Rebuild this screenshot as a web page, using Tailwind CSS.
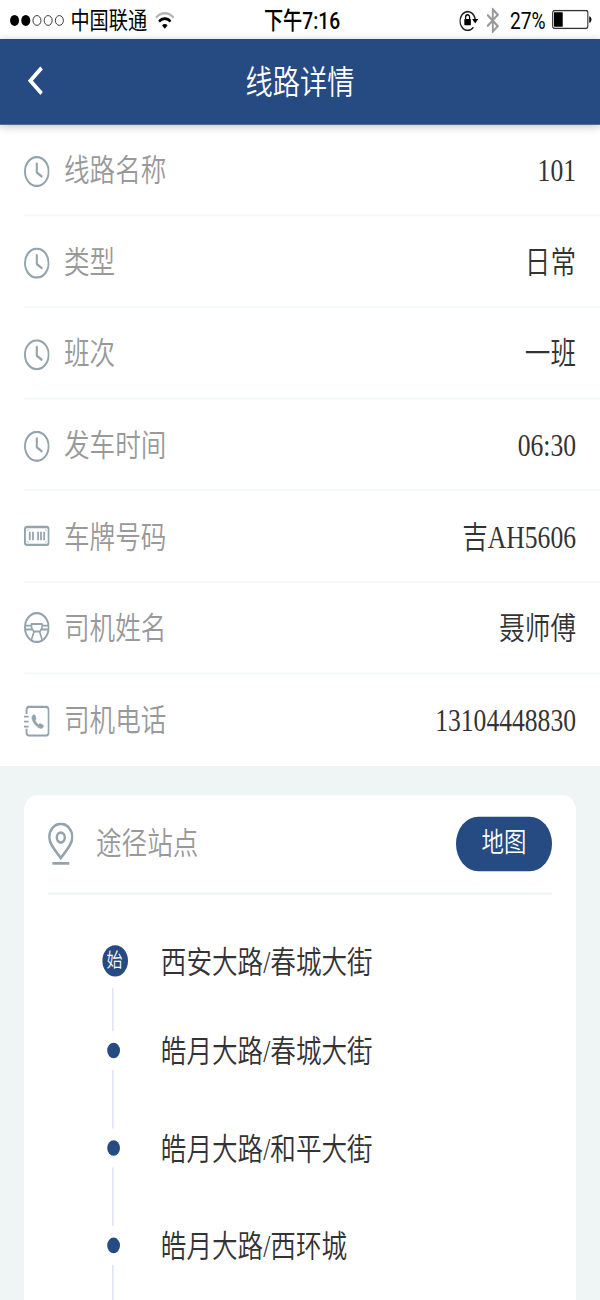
<!DOCTYPE html>
<html lang="zh-CN">
<head>
    <meta charset="UTF-8">
    <meta name="viewport" content="width=device-width, initial-scale=1.0">
    <title>线路详情</title>
    <script src="https://cdn.jsdelivr.net/npm/@tailwindcss/browser@4"></script>
</head>
<body class="w-[600px] h-[1300px] overflow-hidden bg-[#eff4f5]">

    <svg class="hidden">
        <symbol id="clock" viewBox="0 0 16 16">
            <g fill="none" stroke="#93a4ad" stroke-linecap="round" stroke-linejoin="round">
                <circle cx="8" cy="8" r="7.4" stroke-width="1.2"/>
                <path d="M8 4v4.500l3 2" stroke-width="1.3"/>
            </g>
        </symbol>
    </svg>

    <!-- 375x667 screen stretched to the window -->
    <div class="w-[375px] h-[667px] overflow-hidden origin-top-left [transform:scale(1.6,1.949)] flex flex-col bg-[#eff4f5] text-base text-[#333] font-[350] font-['Liberation_Serif','Noto_Sans_CJK_SC',serif]">

        <div class="h-5 shrink-0 bg-white grid grid-cols-[1fr_auto_1fr] items-center pl-[6px] pr-[5px] text-xs text-black leading-4 font-normal font-['Roboto','Noto_Sans_CJK_SC',sans-serif]">
            <div class="flex items-center">
                <svg class="w-[35px] h-[7px]" viewBox="0 0 35 7">
                    <circle cx="3.1" cy="3.5" r="2.8"/>
                    <circle cx="10.1" cy="3.5" r="2.8"/>
                    <g fill="none" stroke="#222" stroke-width=".5">
                        <circle cx="17.1" cy="3.5" r="2.5"/>
                        <circle cx="24.1" cy="3.5" r="2.5"/>
                        <circle cx="31.1" cy="3.5" r="2.5"/>
                    </g>
                </svg>
                <span class="ml-[3px] pt-[1.5px]">中国联通</span>
                <svg class="ml-[5px] w-3 h-[9px]" viewBox="0 0 12 9" fill="none">
                    <path d="M.5 3.1a7.8 7.8 0 0 1 11 0" stroke="#b5b5b5" stroke-width="1.3"/>
                    <path d="M2.4 5.1a5.1 5.1 0 0 1 7.2 0" stroke="#000" stroke-width="1.4"/>
                    <path d="M6 8.8L4.3 7.1a2.3 2.3 0 0 1 3.4 0z" fill="#000"/>
                </svg>
            </div>
            <span class="pt-[1px] pl-[1.5px] font-medium">下午7:16</span>
            <div class="flex items-center justify-end">
                <svg class="w-3 h-[11px]" viewBox="0 0 12 11" fill="none">
                    <path d="M8.900 9A4.800 4.800 0 1 1 10.100 5.200" stroke="#222" stroke-width=".8"/>
                    <path d="M8.100 4.800h3.800L10 7z" fill="#000"/>
                    <rect x="3.200" y="4.800" width="4.100" height="3.100" rx=".3" fill="#000"/>
                    <path d="M4 5V3.800a1.250 1.250 0 0 1 2.500 0V5" stroke="#000" stroke-width=".8"/>
                </svg>
                <svg class="ml-[5px] w-2 h-[13px]" viewBox="0 0 8 13" fill="none" stroke="#999" stroke-width="1.2">
                    <path d="M.5 3.500l6.600 5.900L4 12.200V.8l3.100 2.800L.5 9.500"/>
                </svg>
                <span class="ml-[6.5px] pt-[1px]">27%</span>
                <svg class="ml-[3.5px] mr-[.5px] w-[25px] h-[10px]" viewBox="0 0 25 10">
                    <rect x=".4" y=".4" width="22" height="9.200" rx="1.200" fill="none" stroke="#333" stroke-width=".7"/>
                    <rect x="1.200" y="1.300" width="5.500" height="7.400" rx=".3"/>
                    <path d="M23.300 3.300c1.800.3 1.800 3.100 0 3.400z"/>
                </svg>
            </div>
        </div>

        <header class="relative z-10 h-11 shrink-0 bg-[#264a82] shadow-[0_1px_5px_rgba(0,0,0,0.25)] flex items-center justify-center text-white">
            <svg class="absolute left-[17px] top-[14px] w-[11px] h-[15px]" viewBox="0 0 11 15" fill="none" stroke="#fff" stroke-width="2.2">
                <path d="M9 .8L2 7.400l7 6.600"/>
            </svg>
            <h1 class="pt-[1.5px] text-[17px] leading-none">线路详情</h1>
        </header>

        <main class="flex-grow">
            <ul class="bg-white pl-[15px] leading-none">
                <li class="h-[47px] flex items-center border-b border-[#f5f8f8] pr-[15px]">
                    <svg class="mt-px w-4 h-4"><use href="#clock"/></svg>
                    <span class="ml-[9px] pt-[2.5px] text-[#999]">线路名称</span>
                    <span class="ml-auto pt-[2.5px]">101</span>
                </li>
                <li class="h-[47px] flex items-center border-b border-[#f5f8f8] pr-[15px]">
                    <svg class="mt-px w-4 h-4"><use href="#clock"/></svg>
                    <span class="ml-[9px] pt-[2.5px] text-[#999]">类型</span>
                    <span class="ml-auto pt-[2.5px]">日常</span>
                </li>
                <li class="h-[47px] flex items-center border-b border-[#f5f8f8] pr-[15px]">
                    <svg class="mt-px w-4 h-4"><use href="#clock"/></svg>
                    <span class="ml-[9px] pt-[2.5px] text-[#999]">班次</span>
                    <span class="ml-auto pt-[2.5px]">一班</span>
                </li>
                <li class="h-[47px] flex items-center border-b border-[#f5f8f8] pr-[15px]">
                    <svg class="mt-px w-4 h-4"><use href="#clock"/></svg>
                    <span class="ml-[9px] pt-[2.5px] text-[#999]">发车时间</span>
                    <span class="ml-auto pt-[2.5px]">06:30</span>
                </li>
                <li class="h-[47px] flex items-center border-b border-[#f5f8f8] pr-[15px]">
                    <svg class="w-4 h-4" viewBox="0 0 16 16" fill="none" stroke="#93a4ad">
                        <rect x=".6" y="3.400" width="14.800" height="9.200" rx="1.200" stroke-width="1.200"/>
                        <path d="M3.600 5.800v4.400M5.600 5.800v4.400M8.800 5.800v4.400M10.600 5.800v4.400M12.600 5.800v4.400" stroke-width="1.1"/>
                        <path d="M2 5.300l.7-.7M14 5.300l-.7-.7M2 10.700l.7.7M14 10.700l-.7.7" stroke-width=".5"/>
                    </svg>
                    <span class="ml-[9px] pt-[2.5px] text-[#999]">车牌号码</span>
                    <span class="ml-auto pt-[2.5px]">吉AH5606</span>
                </li>
                <li class="h-[47px] flex items-center border-b border-[#f5f8f8] pr-[15px]">
                    <svg class="w-4 h-4" viewBox="0 0 16 16" fill="none" stroke="#93a4ad" stroke-linejoin="round">
                        <circle cx="8" cy="8" r="7.400" stroke-width="1.200"/>
                        <path d="M4.700 6.200h6.600v1.900L9.900 10H6.100L4.700 8.100z" stroke-width="1"/>
                        <path d="M.8 7h3.900M.9 9h4.400M11.300 7h3.900M10.700 9h4.400M6.300 10l-1.700 4.400M9.700 10l1.700 4.400" stroke-width="1"/>
                    </svg>
                    <span class="ml-[9px] pt-[2.5px] text-[#999]">司机姓名</span>
                    <span class="ml-auto pt-[2.5px]">聂师傅</span>
                </li>
                <li class="h-[47px] flex items-center pr-[15px]">
                    <svg class="w-4 h-4" viewBox="0 0 16 16" fill="none" stroke="#93a4ad" stroke-width="1.200">
                        <path d="M1.600 4.400V2.200A1.600 1.600 0 0 1 3.200.6h10.600a1.600 1.600 0 0 1 1.600 1.600v11.600a1.600 1.600 0 0 1-1.600 1.600H3.200a1.600 1.600 0 0 1-1.600-1.600v-1.900"/>
                        <path d="M0 5.700h2.900M0 8.200h2.900M0 10.800h2.900" stroke-width=".9"/>
                        <path d="M5.300 5.200c.8-.8 1.500-.6 1.800.2l.4 1.200c.1.5-.6.8-.4 1.200.4.8 1 1.400 1.900 1.900.4.2.7-.6 1.300-.4l1.300.5c.7.3.8 1 .1 1.600-1 .8-2.900.2-4.600-1.500C5.300 8.200 4.400 6.200 5.300 5.200z" fill="#93a4ad" stroke="#93a4ad" stroke-width=".3"/>
                    </svg>
                    <span class="ml-[9px] pt-[1.5px] text-[#999]">司机电话</span>
                    <span class="ml-auto pt-px">13104448830</span>
                </li>
            </ul>

            <section class="mx-[15px] mt-[15px] h-[300px] bg-white rounded-t-lg px-[15px] leading-none">
                <div class="h-[51px] pb-px flex items-center border-b border-[#eff3f3]">
                    <svg class="w-4 h-[22px]" viewBox="0 0 16 22" fill="none" stroke="#93a4ad">
                        <path d="M8 18.200C5 14.800.8 11.300.8 7.600a7.200 6.900 0 0 1 14.400 0C15.200 11.300 11 14.800 8 18.200z" stroke-width="1.500"/>
                        <circle cx="8" cy="7.700" r="2.500" stroke-width="1.500"/>
                        <path d="M2.700 21h10.600" stroke-width="1.500"/>
                    </svg>
                    <h2 class="ml-[14px] pt-px text-[#999]">途径站点</h2>
                    <button class="ml-auto w-[60px] h-7 rounded-full bg-[#264a82] text-white text-sm leading-none font-[350]">地图</button>
                </div>

                <ol class="pt-[26px] pl-[33px]">
                    <li class="h-[50px] flex">
                        <div class="w-4 flex flex-col">
                            <span class="ml-[.5px] size-4 rounded-full bg-[#264a82] text-white text-[10px] flex items-center justify-center">始</span>
                            <span class="mt-1.5 ml-[6.5px] w-px h-[22px] bg-[#dfe5f4]"></span>
                        </div>
                        <span class="ml-[21.5px] pt-[2px] h-4 flex items-center">西安大路/春城大街</span>
                    </li>
                    <li class="h-[50px] flex">
                        <div class="w-4 flex flex-col">
                            <span class="ml-[3.5px] size-2 rounded-full bg-[#264a82]"></span>
                            <span class="mt-1.5 ml-[6.5px] w-px h-[30px] bg-[#dfe5f4]"></span>
                        </div>
                        <span class="ml-[21.5px] pt-[2px] h-2 flex items-center">皓月大路/春城大街</span>
                    </li>
                    <li class="h-[50px] flex">
                        <div class="w-4 flex flex-col">
                            <span class="ml-[3.5px] size-2 rounded-full bg-[#264a82]"></span>
                            <span class="mt-1.5 ml-[6.5px] w-px h-[30px] bg-[#dfe5f4]"></span>
                        </div>
                        <span class="ml-[21.5px] pt-[2px] h-2 flex items-center">皓月大路/和平大街</span>
                    </li>
                    <li class="h-[50px] flex">
                        <div class="w-4 flex flex-col">
                            <span class="ml-[3.5px] size-2 rounded-full bg-[#264a82]"></span>
                            <span class="mt-1.5 ml-[6.5px] w-px h-[30px] bg-[#dfe5f4]"></span>
                        </div>
                        <span class="ml-[21.5px] pt-[2px] h-2 flex items-center">皓月大路/西环城</span>
                    </li>
                </ol>
            </section>
        </main>
    </div>

</body>
</html>
